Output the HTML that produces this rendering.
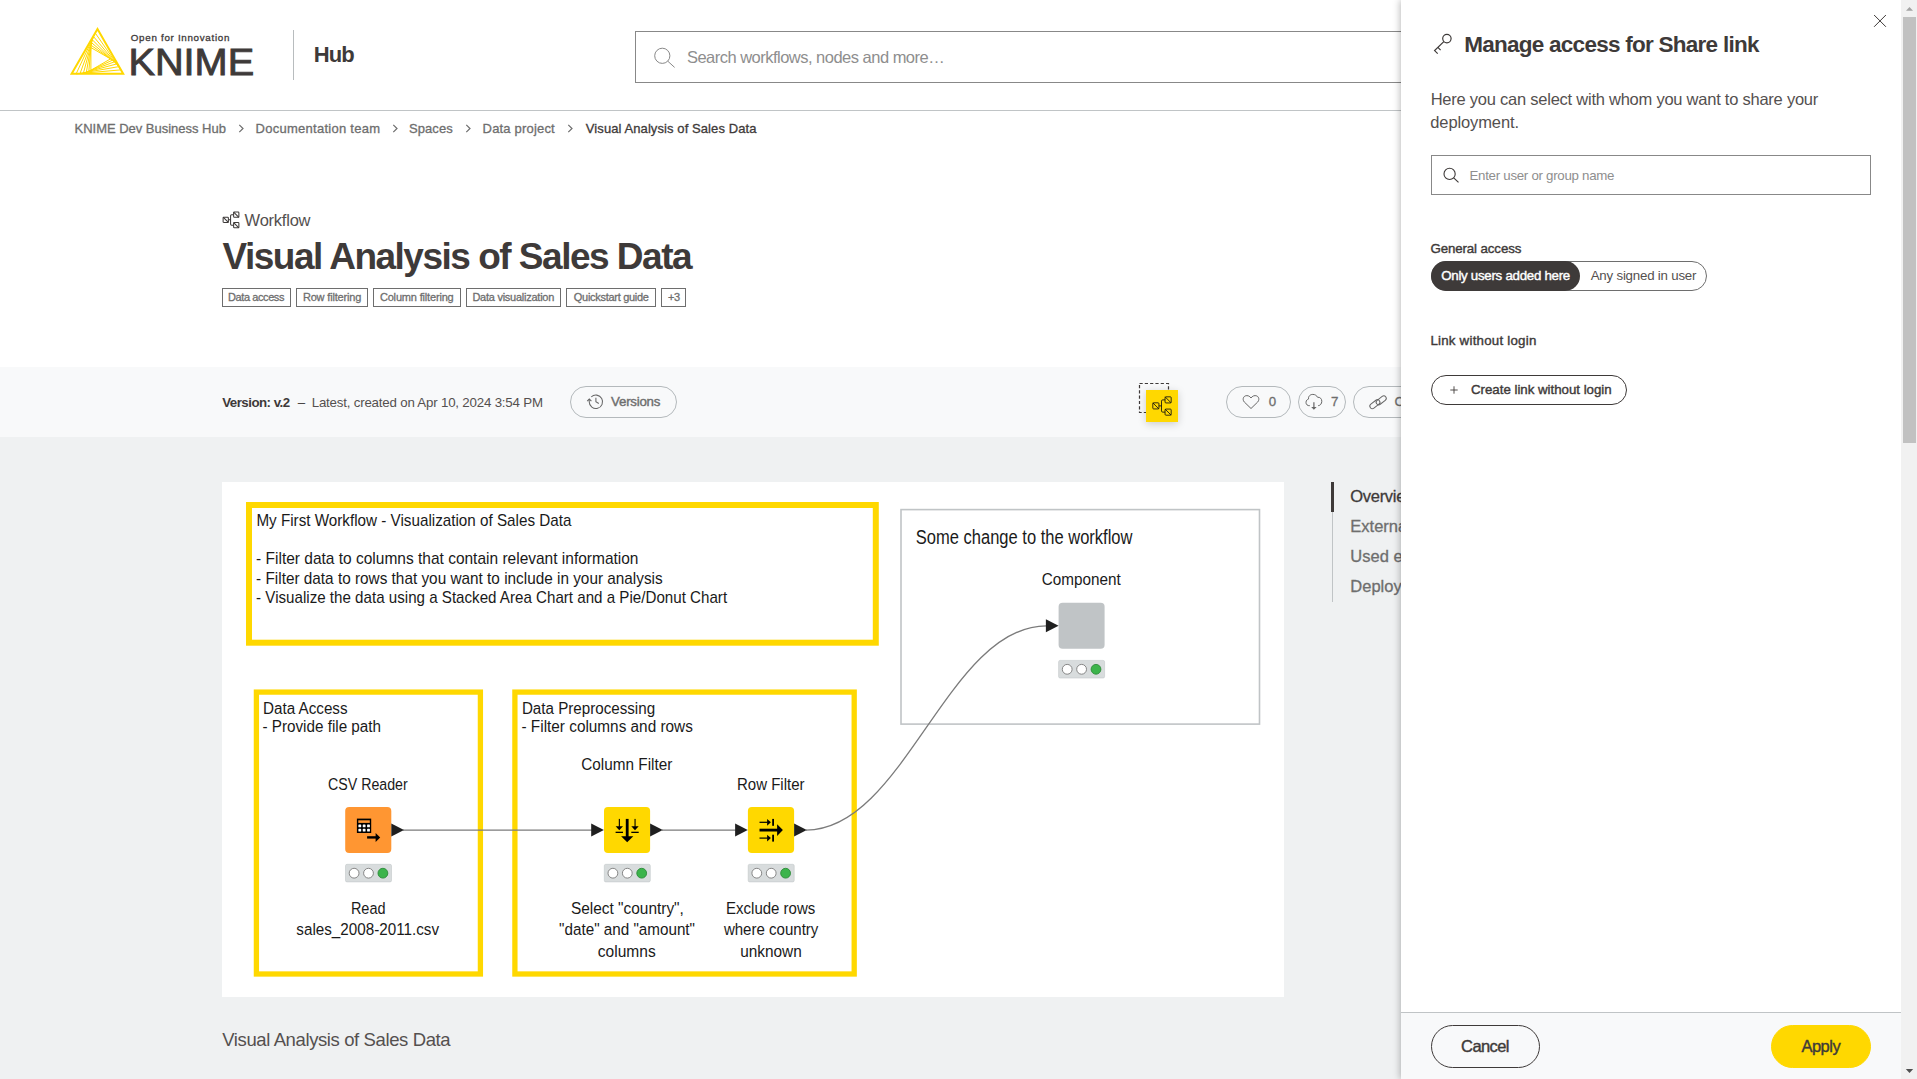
<!DOCTYPE html>
<html lang="en"><head><meta charset="utf-8"><title>Visual Analysis of Sales Data – KNIME Hub</title>
<style>
html,body{margin:0;padding:0}
body{width:1917px;height:1079px;overflow:hidden;position:relative;background:#fff;font-family:'Liberation Sans',sans-serif;color:#3e3a39}
h1,h2,p,ul,li{margin:0;padding:0;list-style:none;font-weight:400;font-size:inherit}
.abs{position:absolute}
svg.abs{overflow:visible}
.t{position:absolute;white-space:nowrap;line-height:1;font-family:'Liberation Sans',sans-serif}
.m{-webkit-text-stroke:0.3px currentColor}
.b{-webkit-text-stroke:0.4px currentColor}
#page{position:absolute;left:0;top:0;width:1901px;height:1079px;overflow:hidden;background:#fff}
header{position:absolute;left:0;top:0;width:1901px;height:110px;border-bottom:1px solid #c0c4c6;background:#fff}
.search{position:absolute;left:635px;top:31px;width:900px;height:50px;border:1px solid #888;background:#fff}
.tag{position:absolute;top:288px;height:17px;border:1px solid #6e6e6e;box-sizing:content-box}
.vbar{position:absolute;left:0;top:367px;width:1901px;height:70px;background:#f8f9fa}
.content{position:absolute;left:0;top:437px;width:1901px;height:642px;background:#eff1f2}
.pill{position:absolute;box-sizing:border-box;border:1px solid #b4b9bc;border-radius:16px;height:32px;top:19px}
#panel{position:absolute;left:1401px;top:0;width:500px;height:1079px;background:#fff;box-shadow:-1px 0 7px rgba(0,0,0,.27)}
#panel .foot{position:absolute;left:0;top:1012px;width:500px;height:67px;border-top:1px solid #c0c4c6;background:#f8f9fa;box-sizing:border-box}
.btn{position:absolute;box-sizing:border-box;border:1px solid #3e3a39;border-radius:22px}
#sb{position:absolute;left:1901px;top:0;width:16px;height:1079px;background:#f1f1f1}
#sb i{position:absolute;left:2px;top:17px;width:13px;height:426px;background:#c1c1c1}
</style></head>
<body>
<div id="page">
<header>
<svg class="abs" style="left:60px;top:20px" width="200" height="70" viewBox="60 20 200 70">
<polygon points="97.50,29.10 71.63,73.80 123.17,73.80" fill="none" stroke="#ffd800" stroke-width="2.0" stroke-linejoin="miter"/>
<polygon points="95.23,33.02 76.15,73.80 120.92,69.88" fill="none" stroke="#ffd800" stroke-width="1.0" stroke-linejoin="miter"/>
<polygon points="93.56,36.60 80.08,73.46 118.66,66.65" fill="none" stroke="#ffd800" stroke-width="1.0" stroke-linejoin="miter"/>
<polygon points="92.37,39.83 83.47,72.86 116.46,64.01" fill="none" stroke="#ffd800" stroke-width="1.0" stroke-linejoin="miter"/>
<polygon points="91.59,42.73 86.36,72.08 114.35,61.89" fill="none" stroke="#ffd800" stroke-width="1.0" stroke-linejoin="miter"/>
<polygon points="91.13,45.30 88.82,71.19 112.35,60.21" fill="none" stroke="#ffd800" stroke-width="1.0" stroke-linejoin="miter"/>
<polygon points="90.93,47.58 90.88,70.22 110.49,58.90" fill="none" stroke="#ffd800" stroke-width="1.0" stroke-linejoin="miter"/>
<text x="128.4" y="74.7" font-family="Liberation Sans, sans-serif" font-size="37.2" fill="#3e3a39" stroke="#3e3a39" stroke-width="0.9" textLength="125.8" lengthAdjust="spacingAndGlyphs">KNIME</text>
<text x="130.8" y="40.7" font-family="Liberation Sans, sans-serif" font-size="9.8" fill="#3e3a39" stroke="#3e3a39" stroke-width="0.3" textLength="98.6" lengthAdjust="spacing">Open for Innovation</text>
</svg>
<div class="abs" style="left:293px;top:30px;width:1px;height:50px;background:#b8bcbe"></div>
<span class="t" style="left:313.8px;top:44px;font-size:22px;font-weight:700;letter-spacing:-0.950px;">Hub</span>
<div class="search"><svg class="abs" style="left:15px;top:12px" width="28" height="28" viewBox="0 0 28 28"><circle cx="11.3" cy="11.8" r="7.6" fill="none" stroke="#888" stroke-width="1"/><path d="M16.8,17.2 L23.6,23.4" stroke="#888" stroke-width="1" fill="none"/></svg>
<span class="t" style="left:50.9px;top:17px;font-size:16.5px;color:#8e8e8e;letter-spacing:-0.513px;">Search workflows, nodes and more…</span></div>
</header>
<nav>
<span class="t m" style="left:74.5px;top:122px;font-size:13px;color:#6e6e6e;letter-spacing:-0.014px;">KNIME Dev Business Hub</span><svg class="abs" style="left:237.5px;top:123px" width="8" height="11" viewBox="0 0 8 11"><path d="M1.3,1.9 L5,5.5 L1.3,9.1" fill="none" stroke="#6e6e6e" stroke-width="1.2"/></svg>
<span class="t m" style="left:255.5px;top:122px;font-size:13px;color:#6e6e6e;letter-spacing:0.271px;">Documentation team</span><svg class="abs" style="left:392px;top:123px" width="8" height="11" viewBox="0 0 8 11"><path d="M1.3,1.9 L5,5.5 L1.3,9.1" fill="none" stroke="#6e6e6e" stroke-width="1.2"/></svg>
<span class="t m" style="left:409.1px;top:122px;font-size:13px;color:#6e6e6e;letter-spacing:0.040px;">Spaces</span><svg class="abs" style="left:465px;top:123px" width="8" height="11" viewBox="0 0 8 11"><path d="M1.3,1.9 L5,5.5 L1.3,9.1" fill="none" stroke="#6e6e6e" stroke-width="1.2"/></svg>
<span class="t m" style="left:482.6px;top:122px;font-size:13px;color:#6e6e6e;letter-spacing:0.182px;">Data project</span><svg class="abs" style="left:567px;top:123px" width="8" height="11" viewBox="0 0 8 11"><path d="M1.3,1.9 L5,5.5 L1.3,9.1" fill="none" stroke="#6e6e6e" stroke-width="1.2"/></svg>
<span class="t m" style="left:585.8px;top:122px;font-size:13px;letter-spacing:0.089px;">Visual Analysis of Sales Data</span>
</nav>
<section>
<svg class="abs" style="left:222px;top:211px;color:#3e3a39" width="18" height="18" viewBox="0 0 18 18"><g transform="translate(0.6 0.5) scale(1.05)"><g fill="none" stroke="currentColor" stroke-width="1.0"><rect x="0.5" y="5.4" width="5" height="5" rx="0.7"/><path d="M0.5,5.4 L5.5,10.4"/><rect x="10.5" y="0.5" width="5" height="5" rx="0.7"/><path d="M10.5,0.5 L15.5,5.5"/><rect x="10.5" y="10.5" width="5" height="5" rx="0.7"/><path d="M10.5,10.5 L15.5,15.5"/><path d="M5.5,7.9 H7.6 M10.5,3 H8.6 Q7.6,3 7.6,4 V12 Q7.6,13 8.6,13 H10.5"/></g></g></svg>
<span class="t" style="left:244.6px;top:212px;font-size:16.5px;color:#54504f;letter-spacing:-0.229px;">Workflow</span>
<h1><span class="t" style="left:222.4px;top:238px;font-size:37px;font-weight:700;letter-spacing:-1.496px;">Visual Analysis of Sales Data</span></h1>
<ul><li class="tag" style="left:222px;width:67px"><span class="t m" style="left:5.0px;top:3px;font-size:11px;color:#6e6e6e;letter-spacing:-0.410px;">Data access</span></li><li class="tag" style="left:296px;width:70px"><span class="t m" style="left:5.9px;top:3px;font-size:11px;color:#6e6e6e;letter-spacing:-0.175px;">Row filtering</span></li><li class="tag" style="left:373px;width:86px"><span class="t m" style="left:5.9px;top:3px;font-size:11px;color:#6e6e6e;letter-spacing:-0.173px;">Column filtering</span></li><li class="tag" style="left:466px;width:93px"><span class="t m" style="left:5.4px;top:3px;font-size:11px;color:#6e6e6e;letter-spacing:-0.253px;">Data visualization</span></li><li class="tag" style="left:566px;width:88px"><span class="t m" style="left:6.8px;top:3px;font-size:11px;color:#6e6e6e;letter-spacing:-0.287px;">Quickstart guide</span></li><li class="tag" style="left:661px;width:23px"><span class="t m" style="left:6.1px;top:3px;font-size:11px;color:#6e6e6e;letter-spacing:-0.600px;">+3</span></li></ul>
</section>
<div class="vbar">
<span class="t" style="left:222.2px;top:29px;font-size:13.3px;font-weight:700;letter-spacing:-0.518px;">Version: v.2</span><span class="t" style="left:297.8px;top:29px;font-size:13.3px;">–</span><span class="t" style="left:311.7px;top:29px;font-size:13.3px;color:#54504f;letter-spacing:-0.197px;">Latest, created on Apr 10, 2024 3:54 PM</span>
<div class="pill" style="left:570px;width:107px"><svg class="abs" style="left:14px;top:6px" width="20" height="20" viewBox="584 392 20 20"><g fill="none" stroke="#666" stroke-width="1.05"><path d="M590.2,396 A6.7,6.7 0 1 1 588.2,400.8 V398.3"/><path d="M586.2,400.2 L588.3,398.1 L590.4,400.2"/><path d="M594.9,396.8 V400.8 L597.8,402.5"/></g></svg><span class="t b" style="left:40.1px;top:8px;font-size:13.3px;color:#6e6e6e;letter-spacing:-0.243px;">Versions</span></div>
<svg class="abs" style="left:1138px;top:15px" width="32" height="32" viewBox="1138 382 32 32"><rect x="1139.5" y="383.5" width="29" height="29" fill="none" stroke="#3e3a39" stroke-width="1.2" stroke-dasharray="3.2 2.1"/></svg>
<div class="abs" style="left:1146px;top:23px;width:32px;height:32px;background:#ffd800;box-shadow:0 2px 8px rgba(0,0,0,.18);color:#111"><svg class="abs" style="left:6px;top:6px" width="20" height="20" viewBox="0 0 20 20"><g transform="translate(0.2 0.2) scale(1.225)"><g fill="none" stroke="currentColor" stroke-width="0.7"><rect x="0.5" y="5.4" width="5" height="5" rx="0.7"/><path d="M0.5,5.4 L5.5,10.4"/><rect x="10.5" y="0.5" width="5" height="5" rx="0.7"/><path d="M10.5,0.5 L15.5,5.5"/><rect x="10.5" y="10.5" width="5" height="5" rx="0.7"/><path d="M10.5,10.5 L15.5,15.5"/><path d="M5.5,7.9 H7.6 M10.5,3 H8.6 Q7.6,3 7.6,4 V12 Q7.6,13 8.6,13 H10.5"/></g></g></svg></div>
<div class="pill" style="left:1226px;width:65px"><svg class="abs" style="left:14px;top:6px" width="22" height="20" viewBox="1241 393 22 20"><path d="M1251,408.5 L1244.3,402 C1242.5,400 1242.9,396.9 1245.3,395.9 C1247.4,395.1 1249.7,396 1251,398 C1252.3,396 1254.6,395.1 1256.7,395.9 C1259.1,396.9 1259.5,400 1257.7,402 Z" fill="none" stroke="#666" stroke-width="1" stroke-linejoin="round"/></svg><span class="t m" style="left:41.8px;top:8px;font-size:13.3px;color:#6e6e6e;">0</span></div>
<div class="pill" style="left:1298px;width:48px"><svg class="abs" style="left:5px;top:5px" width="22" height="22" viewBox="1304 392 22 22"><path d="M1309.8,405.7 C1307.5,405.9 1305.9,404.4 1306,402.4 C1306.1,400.4 1307.3,399.3 1308.6,399 C1308,396.6 1310,394.4 1312.8,394.4 C1315,394.4 1316.8,395.6 1317.6,397.3 C1320,396.9 1321.9,398.9 1321.8,401.3 C1321.7,403.8 1320.3,405.5 1318.2,405.7" fill="none" stroke="#666" stroke-width="1"/><path d="M1313.9,402.2 V408.6" fill="none" stroke="#666" stroke-width="1.2"/><polygon points="1311.2,406.9 1316.6,406.9 1313.9,409.8" fill="#666"/></svg><span class="t m" style="left:32.1px;top:8px;font-size:13.3px;color:#6e6e6e;">7</span></div>
<div class="pill" style="left:1353px;width:170px"><svg class="abs" style="left:14px;top:6px" width="22" height="20" viewBox="1368 393 22 20"><g fill="none" stroke="#666" stroke-width="1"><rect x="-5.7" y="-2.5" width="11.4" height="5" rx="2.5" transform="translate(1374.9 404.2) rotate(-38)"/><rect x="-5.7" y="-2.5" width="11.4" height="5" rx="2.5" transform="translate(1381.2 400.3) rotate(-38)"/></g></svg><span class="t m" style="left:40.5px;top:8px;font-size:13.3px;color:#6e6e6e;letter-spacing:0.171px;">Copy short link</span></div>
</div>
<main class="content">
<svg class="abs" style="left:222px;top:45px;background:#fff" width="1062" height="515" viewBox="222 482 1062 515" font-family="Liberation Sans, sans-serif" fill="#1a1a1a">
<rect x="249" y="505" width="626.8" height="137.7" fill="none" stroke="#ffd800" stroke-width="6"/>
<rect x="256.4" y="692.1" width="224" height="281.9" fill="none" stroke="#ffd800" stroke-width="5.3"/>
<rect x="514.9" y="692.1" width="339.3" height="281.9" fill="none" stroke="#ffd800" stroke-width="5.3"/>
<rect x="901" y="509.6" width="358.5" height="214.5" fill="none" stroke="#c0c4c6" stroke-width="1.6"/>
<g fill="none" stroke="#7b7b7b" stroke-width="1.3"><path d="M403,830.1 H592"/><path d="M662,830.1 H736"/><path d="M806,830.1 C904.4,830.1 947.5,625.8 1046.5,625.8"/></g>
<rect x="345.2" y="806.9" width="46.1" height="46.1" rx="4" fill="#ff9632"/>
<g><rect x="356.9" y="818.6" width="14.3" height="14.4" fill="#000"/><rect x="358.3" y="820.3" width="11.5" height="2.6" fill="#ff9632"/><rect x="358.40" y="824.50" width="2.8" height="2.8" rx="0.6" fill="#fff"/><rect x="358.40" y="828.80" width="2.8" height="2.8" rx="0.6" fill="#fff"/><rect x="362.75" y="824.50" width="2.8" height="2.8" rx="0.6" fill="#fff"/><rect x="362.75" y="828.80" width="2.8" height="2.8" rx="0.6" fill="#fff"/><rect x="367.10" y="824.50" width="2.8" height="2.8" rx="0.6" fill="#fff"/><rect x="367.10" y="828.80" width="2.8" height="2.8" rx="0.6" fill="#fff"/><path d="M367.1,837.4 H377.5" stroke="#000" stroke-width="2.4" fill="none"/><polygon points="375.6,832.9 380.2,837.4 375.6,841.9" fill="#000"/></g>
<polygon points="391.3,823.6 404.0,830.1 391.3,836.6" fill="#1f1f1f"/>
<rect x="345.5" y="864.3" width="46" height="17.6" rx="1.5" fill="#d8dcdd" stroke="#c3c7c9" stroke-width="0.6"/><circle cx="354.1" cy="873.2" r="4.9" fill="#fff" stroke="#7b7b7b" stroke-width="0.9"/><circle cx="368.5" cy="873.2" r="4.9" fill="#fff" stroke="#7b7b7b" stroke-width="0.9"/><circle cx="382.9" cy="873.2" r="4.9" fill="#3cb44b" stroke="#2e8b3a" stroke-width="0.9"/>
<rect x="604" y="806.9" width="46.1" height="46.1" rx="4" fill="#ffd800"/>
<polygon points="591.2,823.6 603.9,830.1 591.2,836.6" fill="#1f1f1f"/>
<polygon points="650.1,823.6 662.8,830.1 650.1,836.6" fill="#1f1f1f"/>
<g fill="#000" stroke="none"><rect x="625.8" y="818.9" width="2.8" height="18.5"/><polygon points="621.1,836.2 633.3,836.2 627.2,842.3"/><rect x="618.8" y="818.9" width="1.1" height="8"/><polygon points="615.6,826.2 623,826.2 619.3,830.2"/><rect x="615.6" y="831.7" width="7.4" height="1.3"/><rect x="634.5" y="818.9" width="1.1" height="8"/><polygon points="631.3,826.2 638.7,826.2 635,830.2"/><rect x="631.3" y="831.7" width="7.4" height="1.3"/></g>
<rect x="604.3" y="864.3" width="46" height="17.6" rx="1.5" fill="#d8dcdd" stroke="#c3c7c9" stroke-width="0.6"/><circle cx="612.9" cy="873.2" r="4.9" fill="#fff" stroke="#7b7b7b" stroke-width="0.9"/><circle cx="627.3" cy="873.2" r="4.9" fill="#fff" stroke="#7b7b7b" stroke-width="0.9"/><circle cx="641.7" cy="873.2" r="4.9" fill="#3cb44b" stroke="#2e8b3a" stroke-width="0.9"/>
<rect x="747.9" y="806.9" width="46.2" height="46.1" rx="4" fill="#ffd800"/>
<polygon points="735.1,823.6 747.8,830.1 735.1,836.6" fill="#1f1f1f"/>
<polygon points="794.1,823.6 806.8,830.1 794.1,836.6" fill="#1f1f1f"/>
<g fill="#000" stroke="none"><rect x="759.5" y="828.7" width="18.5" height="2.8"/><polygon points="777.1,824.2 782.9,830.1 777.1,836"/><rect x="759.5" y="821.7" width="8" height="1.2"/><polygon points="767.1,818.9 770.9,822.3 767.1,825.8"/><rect x="772.2" y="818.9" width="1.8" height="6.9"/><rect x="759.5" y="837.5" width="8" height="1.2"/><polygon points="767.1,834.7 770.9,838.1 767.1,841.6"/><rect x="772.2" y="834.7" width="1.8" height="6.9"/></g>
<rect x="748.2" y="864.3" width="46" height="17.6" rx="1.5" fill="#d8dcdd" stroke="#c3c7c9" stroke-width="0.6"/><circle cx="756.8" cy="873.2" r="4.9" fill="#fff" stroke="#7b7b7b" stroke-width="0.9"/><circle cx="771.2" cy="873.2" r="4.9" fill="#fff" stroke="#7b7b7b" stroke-width="0.9"/><circle cx="785.6" cy="873.2" r="4.9" fill="#3cb44b" stroke="#2e8b3a" stroke-width="0.9"/>
<rect x="1058.6" y="602.8" width="46" height="45.9" rx="4" fill="#c0c4c6"/>
<polygon points="1045.9,619.3 1058.6,625.8 1045.9,632.3" fill="#1f1f1f"/>
<rect x="1058.6" y="660.4" width="46" height="17.6" rx="1.5" fill="#d8dcdd" stroke="#c3c7c9" stroke-width="0.6"/><circle cx="1067.2" cy="669.3" r="4.9" fill="#fff" stroke="#7b7b7b" stroke-width="0.9"/><circle cx="1081.6" cy="669.3" r="4.9" fill="#fff" stroke="#7b7b7b" stroke-width="0.9"/><circle cx="1096.0" cy="669.3" r="4.9" fill="#3cb44b" stroke="#2e8b3a" stroke-width="0.9"/>
<text x="256.4" y="526.0" font-size="17" textLength="315.0" lengthAdjust="spacingAndGlyphs">My First Workflow - Visualization of Sales Data</text>
<text x="256.1" y="564.2" font-size="17" textLength="382.4" lengthAdjust="spacingAndGlyphs">- Filter data to columns that contain relevant information</text>
<text x="256.1" y="583.5" font-size="17" textLength="406.6" lengthAdjust="spacingAndGlyphs">- Filter data to rows that you want to include in your analysis</text>
<text x="256.1" y="602.9" font-size="17" textLength="471.0" lengthAdjust="spacingAndGlyphs">- Visualize the data using a Stacked Area Chart and a Pie/Donut Chart</text>
<text x="263.0" y="713.5" font-size="16" textLength="84.6" lengthAdjust="spacingAndGlyphs">Data Access</text>
<text x="262.5" y="731.7" font-size="16" textLength="118.5" lengthAdjust="spacingAndGlyphs">- Provide file path</text>
<text x="521.9" y="713.5" font-size="16" textLength="133.2" lengthAdjust="spacingAndGlyphs">Data Preprocessing</text>
<text x="521.5" y="731.7" font-size="16" textLength="171.3" lengthAdjust="spacingAndGlyphs">- Filter columns and rows</text>
<text x="328.0" y="789.7" font-size="16.7" textLength="79.7" lengthAdjust="spacingAndGlyphs">CSV Reader</text>
<text x="581.3" y="769.9" font-size="16.7" textLength="91.0" lengthAdjust="spacingAndGlyphs">Column Filter</text>
<text x="737.0" y="789.7" font-size="16.7" textLength="67.5" lengthAdjust="spacingAndGlyphs">Row Filter</text>
<text x="1041.8" y="585.2" font-size="16.7" textLength="79.0" lengthAdjust="spacingAndGlyphs">Component</text>
<text x="350.9" y="914.0" font-size="16.7" textLength="34.6" lengthAdjust="spacingAndGlyphs">Read</text>
<text x="296.3" y="935.0" font-size="16.7" textLength="142.8" lengthAdjust="spacingAndGlyphs">sales_2008-2011.csv</text>
<text x="570.9" y="914.0" font-size="16.7" textLength="113.0" lengthAdjust="spacingAndGlyphs">Select "country",</text>
<text x="559.1" y="935.0" font-size="16.7" textLength="135.9" lengthAdjust="spacingAndGlyphs">"date" and "amount"</text>
<text x="597.8" y="956.6" font-size="16.7" textLength="57.9" lengthAdjust="spacingAndGlyphs">columns</text>
<text x="726.1" y="914.0" font-size="16.7" textLength="89.2" lengthAdjust="spacingAndGlyphs">Exclude rows</text>
<text x="723.9" y="935.0" font-size="16.7" textLength="94.5" lengthAdjust="spacingAndGlyphs">where country</text>
<text x="740.2" y="956.6" font-size="16.7" textLength="61.6" lengthAdjust="spacingAndGlyphs">unknown</text>
<text x="915.8" y="544.2" font-size="20" textLength="216.7" lengthAdjust="spacingAndGlyphs">Some change to the workflow</text>
</svg>
<nav>
<div class="abs" style="left:1332px;top:45px;width:1px;height:120px;background:#c0c4c6"></div>
<div class="abs" style="left:1331px;top:45px;width:3px;height:30px;background:#3e3a39"></div>
<span class="t m" style="left:1350.3px;top:51px;font-size:16.5px;letter-spacing:-0.300px;">Overview</span><span class="t m" style="left:1350.3px;top:81px;font-size:16.5px;color:#6e6e6e;">External resources</span><span class="t m" style="left:1350.3px;top:111px;font-size:16.5px;color:#6e6e6e;">Used extensions &amp; nodes</span><span class="t m" style="left:1350.3px;top:141px;font-size:16.5px;color:#6e6e6e;">Deployments</span>
</nav>
<h2><span class="t" style="left:222.2px;top:594px;font-size:18.5px;color:#54504f;letter-spacing:-0.386px;">Visual Analysis of Sales Data</span></h2>
</main>
</div>
<aside id="panel">
<svg class="abs" style="left:28px;top:30px" width="28" height="28" viewBox="1429 30 28 28"><g fill="none" stroke="#3e3a39" stroke-width="1.2"><circle cx="1446.9" cy="38.6" r="4.2"/><path d="M1443.8,41.6 L1434.6,50.6 L1437.7,53.6 M1437.9,47.4 L1440.6,50.2"/></g></svg>
<h2><span class="t" style="left:63.2px;top:34px;font-size:22.5px;font-weight:700;letter-spacing:-0.737px;">Manage access for Share link</span></h2>
<svg class="abs" style="left:471px;top:13px" width="16" height="16" viewBox="0 0 16 16"><path d="M2.1,2 L13.9,13.8 M13.9,2 L2.1,13.8" stroke="#3e3a39" stroke-width="1" fill="none"/></svg>
<p><span class="t" style="left:29.7px;top:91px;font-size:16.5px;color:#54504f;letter-spacing:-0.241px;">Here you can select with whom you want to share your</span><span class="t" style="left:29.3px;top:114px;font-size:16.5px;color:#54504f;letter-spacing:-0.120px;">deployment.</span></p>
<div class="abs" style="left:30px;top:155px;width:438px;height:38px;border:1px solid #888"><svg class="abs" style="left:8px;top:8px" width="24" height="24" viewBox="0 0 24 24"><circle cx="9.6" cy="9.9" r="5.6" fill="none" stroke="#3e3a39" stroke-width="1.1"/><path d="M13.7,13.9 L18.5,18.4" stroke="#3e3a39" stroke-width="1.1" fill="none"/></svg><span class="t" style="left:37.5px;top:13px;font-size:13.3px;color:#8e8e8e;letter-spacing:-0.283px;">Enter user or group name</span></div>
<span class="t b" style="left:29.4px;top:242px;font-size:13.3px;letter-spacing:-0.108px;">General access</span>
<div class="abs" style="left:30px;top:261px;width:276px;height:30px;box-sizing:border-box;border:1px solid #6e6e6e;border-radius:15px">
<div class="abs" style="left:-1px;top:-1px;width:149px;height:30px;border-radius:15px;background:#3e3a39"><span class="t b" style="left:10.2px;top:8px;font-size:13.3px;color:#ffffff;letter-spacing:-0.275px;">Only users added here</span></div>
<span class="t" style="left:158.7px;top:7px;font-size:13.3px;color:#54504f;letter-spacing:-0.212px;">Any signed in user</span></div>
<span class="t b" style="left:29.4px;top:334px;font-size:13.3px;letter-spacing:0.229px;">Link without login</span>
<div class="btn" style="left:30px;top:375px;width:196px;height:30px;border-radius:15px"><svg class="abs" style="left:16px;top:8px" width="12" height="12" viewBox="0 0 12 12"><path d="M6,2.3 V9.7 M2.3,6 H9.7" stroke="#3e3a39" stroke-width="0.9" fill="none"/></svg><span class="t b" style="left:39.0px;top:7px;font-size:13.3px;letter-spacing:-0.021px;">Create link without login</span></div>
<div class="foot">
<div class="btn" style="left:30px;top:12px;width:109px;height:43px"><span class="t b" style="left:29.1px;top:12px;font-size:16.5px;letter-spacing:-0.600px;">Cancel</span></div>
<div class="btn" style="left:370px;top:12px;width:100px;height:43px;border-color:#ffd800;background:#ffd800"><span class="t b" style="left:29.4px;top:12px;font-size:16.5px;letter-spacing:-0.500px;">Apply</span></div>
</div>
</aside>
<div id="sb"><i></i>
<svg class="abs" style="left:0;top:0" width="16" height="17" viewBox="0 0 16 17"><polygon points="5,10.8 8.5,6.9 12,10.8" fill="#a3a3a3"/></svg>
<svg class="abs" style="left:0;top:1062px" width="16" height="17" viewBox="0 0 16 17"><polygon points="4.8,7.1 8.5,11.1 12.2,7.1" fill="#505050"/></svg>
</div>
</body></html>
